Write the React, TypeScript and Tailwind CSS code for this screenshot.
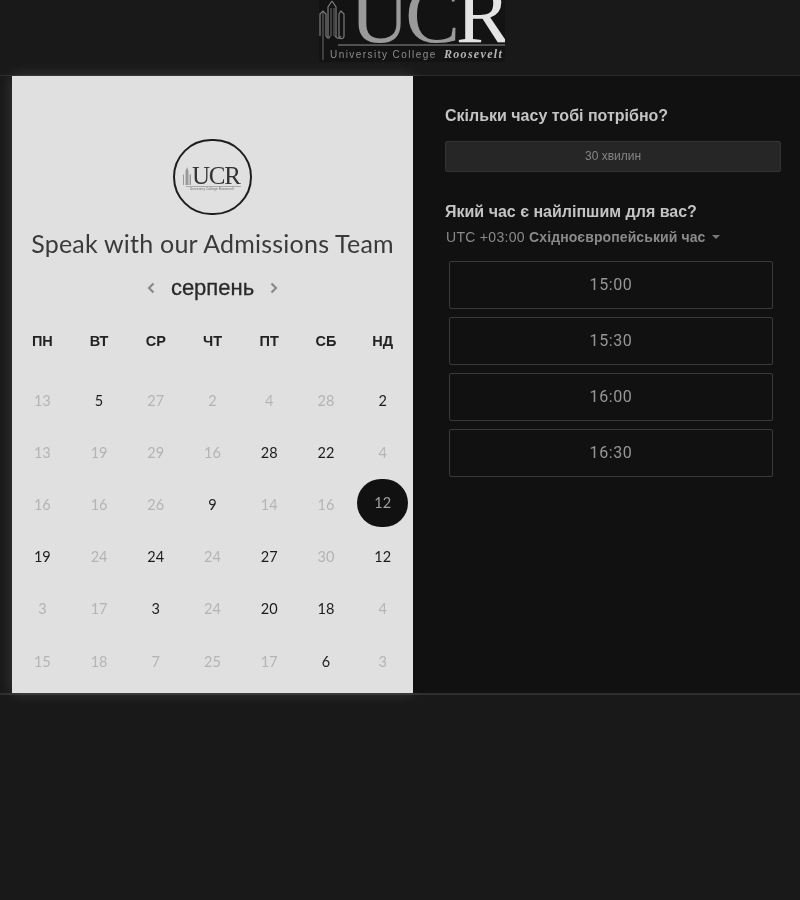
import React from "react";

const sans = "font-['Liberation_Sans',Arial,sans-serif]";
const lato = "font-['Lato',sans-serif]";

function Logo({ className }: { className: string }) {
  return (
    <svg viewBox="0 0 186 62" className={className} aria-label="UCR University College Roosevelt">
      <g fill="none" stroke="#7c7c7c" strokeWidth="1.2">
        <path d="M4 60V12" stroke="#5e5e5e" />
        <path d="M1 36V14l3-3 3 3v22" />
        <path d="M13 1l-4 6v30M13 1l4 6v30" />
        <path d="M7 36c2 3 3 3 4 0M16 36c2 3 4 3 6 0" />
        <path d="M20 38V14l2-3 3 3v22c0 3-3 3-5 2" />
        <path d="M12 8v28M15 8v28" stroke="#5e5e5e" />
      </g>
      <path d="M19 45H186" stroke="#8f8f8f" strokeWidth="1" fill="none" />
      <text x="31" y="41.5" fontFamily="Liberation Serif, serif" fontSize="82" fill="#9a9a9a" letterSpacing="-4">
        UC<tspan fill="#e4e4e4">R</tspan>
      </text>
      <text x="11" y="57.5" fontFamily="Liberation Sans, sans-serif" fontSize="10" fill="#8c8c8c" letterSpacing="1.45">
        University College
      </text>
      <text x="125" y="57.5" fontFamily="Liberation Serif, serif" fontStyle="italic" fontWeight="700" fontSize="12" fill="#b5b5b5" letterSpacing="1.3">
        Roosevelt
      </text>
    </svg>
  );
}

function SmallLogo() {
  return (
    <svg viewBox="0 0 60 26" className="w-[60px] h-[26px]" aria-hidden="true">
      <g fill="#9a9a9a">
        <path d="M0 20V10l1-1v11zM2.5 20V6L4 2l1.5 4v14zM6.5 20V10L8 9v11z" />
      </g>
      <text x="9" y="19" fontFamily="Liberation Serif, serif" fontSize="25" fill="#333" letterSpacing="-1.2">
        UCR
      </text>
      <path d="M3 21.5H58" stroke="#777" strokeWidth="0.5" />
      <text x="7" y="25" fontFamily="Liberation Sans, sans-serif" fontSize="3" fill="#666" letterSpacing="0.2">
        University College Roosevelt
      </text>
    </svg>
  );
}

const days = ["ПН", "ВТ", "СР", "ЧТ", "ПТ", "СБ", "НД"];

const weeks: [string, boolean][][] = [
  [["13", false], ["5", true], ["27", false], ["2", false], ["4", false], ["28", false], ["2", true]],
  [["13", false], ["19", false], ["29", false], ["16", false], ["28", true], ["22", true], ["4", false]],
  [["16", false], ["16", false], ["26", false], ["9", true], ["14", false], ["16", false], ["12", true]],
  [["19", true], ["24", false], ["24", true], ["24", false], ["27", true], ["30", false], ["12", true]],
  [["3", false], ["17", false], ["3", true], ["24", false], ["20", true], ["18", true], ["4", false]],
  [["15", false], ["18", false], ["7", false], ["25", false], ["17", false], ["6", true], ["3", false]],
];

const slots = ["15:00", "15:30", "16:00", "16:30"];

export default function App() {
  return (
    <div className={`min-h-[900px] bg-[#191919] ${sans} blur-[0.4px]`}>
      <header className="h-[76px] flex justify-center pl-[24px] border-b border-[#2c2c2c] overflow-hidden">
        <div className="w-[186px] h-[62px] bg-[#131313]">
          <Logo className="w-[186px] h-[62px]" />
        </div>
      </header>

      <main className="flex h-[619px] pl-[12px] border-b-2 border-[#2e2e2e]">
        <section className="w-[401px] bg-[#e0e0e0] shadow-[0_0_14px_rgba(255,255,255,0.14)] flex flex-col items-center pt-[63px]">
          <div className="w-[79px] h-[76px] rounded-full border-2 border-[#1e1e1e] flex items-center justify-center pt-[2px]">
            <SmallLogo />
          </div>
          <h1 className={`${lato} mt-[13px] text-[25px] leading-[30px] text-[#3a3a3a] tracking-[0.22px] whitespace-nowrap`}>
            Speak with our Admissions Team
          </h1>
          <div className="mt-[15px] h-[30px] flex items-center gap-[16px] text-[#8a8a8a]">
            <svg width="8" height="12" viewBox="0 0 8 12" fill="none" stroke="currentColor" strokeWidth="2.2">
              <path d="M6.5 1.5L2 6l4.5 4.5" />
            </svg>
            <span className="text-[22px] leading-[30px] text-[#2a2a2a] [-webkit-text-stroke:0.3px_#2a2a2a]">серпень</span>
            <svg width="8" height="12" viewBox="0 0 8 12" fill="none" stroke="currentColor" strokeWidth="2.2">
              <path d="M1.5 1.5L6 6l-4.5 4.5" />
            </svg>
          </div>
          <div className="mt-[28px] w-[397px] grid grid-cols-7">
            {days.map((d) => (
              <div key={d} className="text-center text-[14.5px] leading-[20px] font-bold text-[#222222]">
                {d}
              </div>
            ))}
          </div>
          <div className={`${lato} mt-[23.5px] w-[397px] grid grid-cols-7 auto-rows-[52.2px] text-[14.5px]`}>
            {weeks.flatMap((w, i) =>
              w.map(([n, on], j) =>
                i === 2 && j === 6 ? (
                  <div key={`${i}-${j}`} className="flex items-center justify-center pb-[3px]">
                    <span className="w-[51px] h-[48px] rounded-full bg-[#111111] text-[#a0a0a0] flex items-center justify-center pb-[1px]">
                      {n}
                    </span>
                  </div>
                ) : (
                  <div
                    key={`${i}-${j}`}
                    className={`flex items-center justify-center ${on ? "text-[#1c1c1c]" : "text-[#b4b4b4]"}`}
                  >
                    {n}
                  </div>
                )
              )
            )}
          </div>
        </section>

        <section className="relative flex-1 bg-[#111111] pt-[30px] pl-[32px] pr-[19px]">
          <h2 className="text-[16px] leading-[20px] font-bold text-[#c4c4c4]">Скільки часу тобі потрібно?</h2>
          <div className="mt-[15px] h-[31px] bg-[#262626] border border-[#343434] rounded-[2px] flex items-center justify-center text-[12px] text-[#858585]">
            <span className="-translate-y-[1px]">30 хвилин</span>
          </div>
          <h2 className="mt-[30px] text-[16px] leading-[20px] font-bold text-[#c4c4c4]">Який час є найліпшим для вас?</h2>
          <div className="mt-[5px] ml-[1px] h-[20px] flex items-center gap-[7px] text-[14px] text-[#8a8a8a]">
            <span className="tracking-[0.3px]">
              UTC +03:00 <span className="font-bold tracking-[0.1px]">Східноєвропейський час</span>
            </span>
            <span className="w-0 h-0 border-x-[4px] border-x-transparent border-t-[4px] border-t-[#777777]" />
          </div>
          <div className="mt-[14px] ml-[4px] mr-[8px] flex flex-col gap-[8px]">
            {slots.map((s) => (
              <div
                key={s}
                className="h-[48px] border border-[#3a3a3a] rounded-[2px] flex items-center justify-center font-['Roboto',sans-serif] text-[16px] tracking-[0.6px] text-[#969696]"
              >
                {s}
              </div>
            ))}
          </div>
        </section>
      </main>
    </div>
  );
}
